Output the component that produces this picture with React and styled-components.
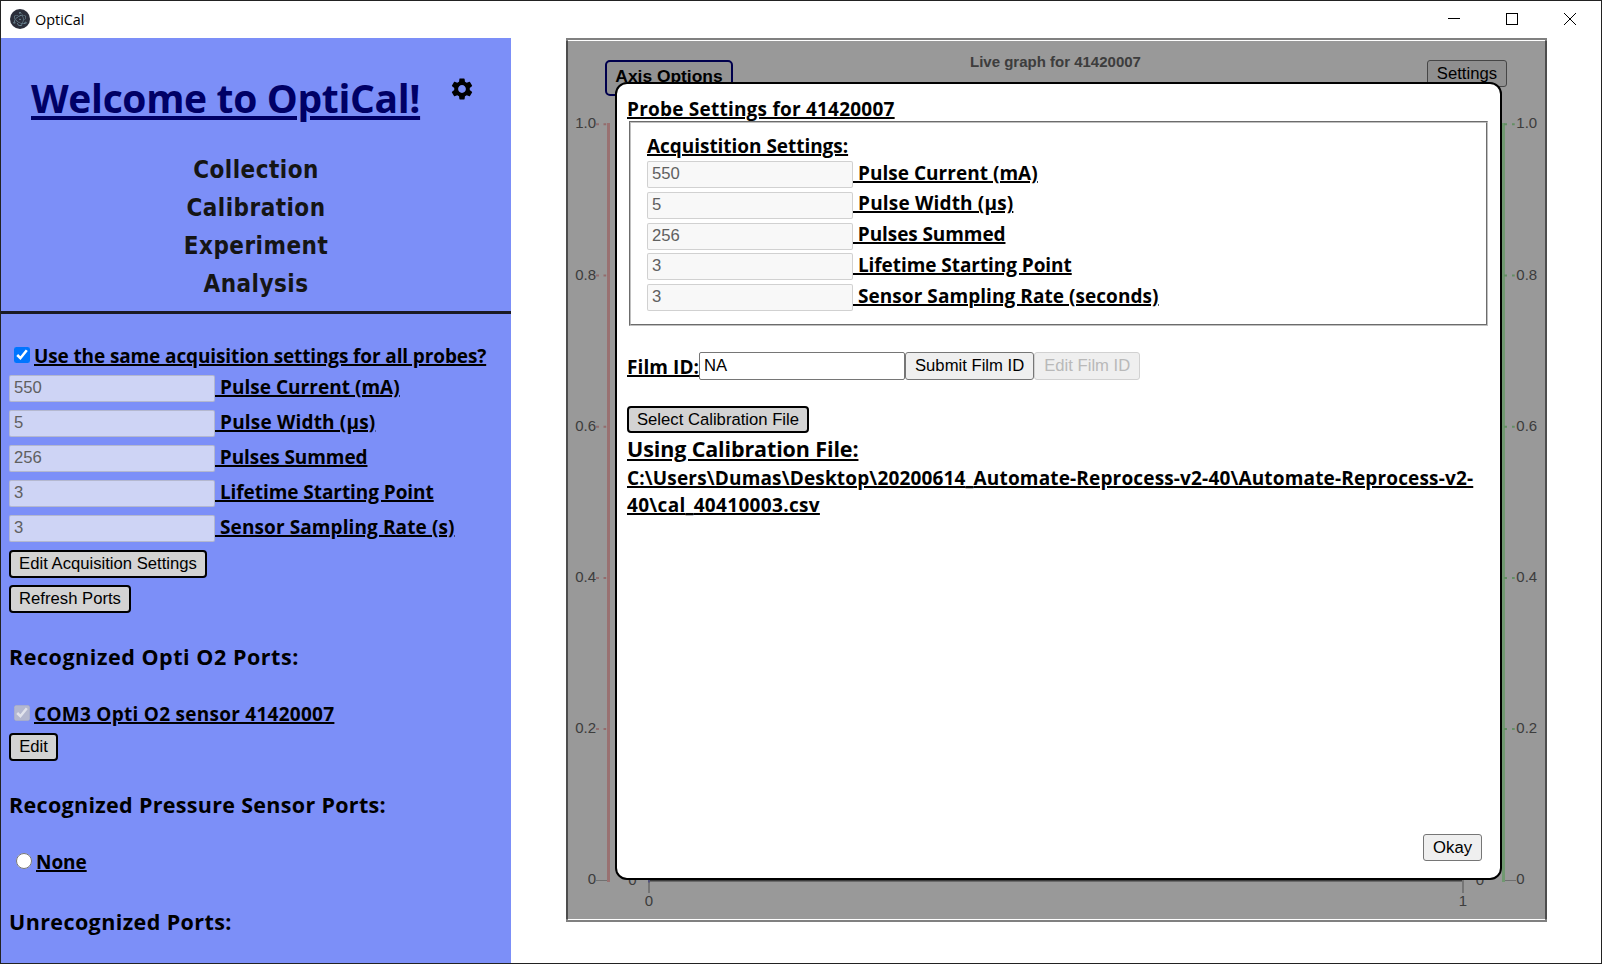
import React from "react";
import styled, { createGlobalStyle, css } from "styled-components";
import { MdSettings } from "react-icons/md";
import { SiElectron } from "react-icons/si";

const ui = `"Open Sans", "Noto Sans", sans-serif`;
const arial = `"Liberation Sans", Arial, sans-serif`;

const GlobalStyle = createGlobalStyle`
  * { box-sizing: border-box; }
  body { margin: 0; background: #fff; color: #000; font-family: ${ui}; }
`;

const Window = styled.div`
  width: 1602px;
  height: 964px;
  border: 1px solid #222;
  background: #fff;
  display: flex;
  flex-direction: column;
  overflow: hidden;
`;

const TitleBar = styled.header`
  height: 37px;
  flex: none;
  display: flex;
  align-items: center;
  padding: 0 24px 2px 9px;
`;

const AppIcon = styled.div`
  width: 20px;
  height: 20px;
  border-radius: 50%;
  background: #2b2e3a;
  color: #9cc9d6;
  display: flex;
  align-items: center;
  justify-content: center;
`;

const AppName = styled.span`
  font-size: 14.4px;
  line-height: 20px;
  margin-left: 5px;
  padding-top: 2px;
`;

const WindowControls = styled.div`
  margin-left: auto;
  margin-right: 1px;
  display: flex;
  gap: 46px;
  svg { display: block; }
`;

const Body = styled.div`
  flex: 1;
  min-height: 0;
  display: flex;
`;

const Sidebar = styled.aside`
  width: 510px;
  flex: none;
  background: #7c8ff8;
  overflow: hidden;
`;

const SidebarHeader = styled.div`
  display: flex;
  align-items: flex-start;
  gap: 29px;
  padding: 34px 0 0 30px;
  height: 113px;
`;

const Title = styled.h1`
  margin: 0;
  width: 389px;
  font-size: 39px;
  line-height: 52px;
  letter-spacing: -0.34px;
  white-space: nowrap;
  color: #000066;
  text-decoration: underline 4px;
  text-underline-offset: 3px;
`;

const GearButton = styled.div`
  margin-top: 4px;
  line-height: 0;
`;

const Nav = styled.nav`
  display: flex;
  flex-direction: column;
  align-items: center;
  height: 163px;
  border-bottom: 3px solid #1a1a24;
`;

const NavItem = styled.a`
  font: bold 24px/38px "DejaVu Sans Condensed", "DejaVu Sans", sans-serif;
  font-stretch: condensed;
  letter-spacing: 0.48px;
  color: #151515;
`;

const SidebarBody = styled.div`
  padding: 29px 0 0 8px;
  display: flex;
  flex-direction: column;
  align-items: flex-start;
`;

const CheckRow = styled.label`
  display: flex;
  height: 28px;
`;

const Toggle = styled.input`
  width: 16px;
  height: 16px;
  margin: ${p => (p.type === "radio" ? "4px 4px 0 7px" : "4px 4px 0 5px")};
`;

const Label = styled.span`
  font-weight: bold;
  font-size: 19px;
  line-height: 26px;
  letter-spacing: ${p => p.$spacing || 0}px;
  white-space: pre;
  text-decoration: underline 2px;
  text-underline-offset: 1px;
`;

const FieldRow = styled.div`
  display: flex;
  align-items: flex-start;
  height: ${p => p.$pitch}px;
  & > ${Label} { margin-top: ${p => p.$labelTop}px; }
`;

const TextField = styled.input`
  width: 206px;
  height: 27px;
  margin: ${p => p.$top || 0}px 0 0;
  padding: 0 4px 1px;
  border: 1px solid ${p => (p.disabled ? "rgba(118,118,118,0.3)" : "#767676")};
  border-radius: 2px;
  background: ${p => (p.$onBlue ? "#ced4f5" : p.disabled ? "#f8f8f8" : "#fff")};
  color: ${p => (p.disabled ? "#606060" : "#000")};
  font: 16.67px ${arial};
`;

const Button = styled.button`
  height: 27px;
  padding: 0 9px;
  border: 1px solid #767676;
  border-radius: 3px;
  background: #efefef;
  color: #000;
  font: 16.67px ${arial};
  white-space: nowrap;
  ${p => p.$strong && css`
    padding: 0 8px;
    border: 2px solid #000;
    border-radius: 4px;
    background: #d3d3d3;
  `}
  &:disabled {
    color: #b9b9b9;
    border-color: #d1d1d1;
  }
`;

const SideButton = styled(Button)`
  height: 28px;
  padding-bottom: 1px;
  margin-top: ${p => p.$top}px;
  width: ${p => p.$width}px;
`;

const SectionTitle = styled.h2`
  margin: ${p => p.$top}px 0 ${p => p.$bottom || 0}px;
  font-size: 21.5px;
  line-height: 30px;
  letter-spacing: ${p => p.$spacing || 0}px;
  white-space: nowrap;
`;

const Main = styled.main`
  flex: 1;
  padding-left: 55px;
`;

const GraphPanel = styled.section`
  position: relative;
  width: 981px;
  height: 884px;
  border: 2px solid #808080;
`;

const GraphHeader = styled.div`
  height: 56px;
  display: flex;
  align-items: flex-start;
  padding: 20px 38px 0 37px;
  & > ${Button} { margin-left: auto; }
`;

const AxisButton = styled.button`
  width: 128px;
  height: 36px;
  padding: 0 0 4px;
  border: 2px solid #000080;
  border-radius: 5px;
  background: #f5f5f5;
  font: bold 17.4px ${arial};
  color: #000;
`;

const GraphTitle = styled.div`
  margin: -8px 0 0 237px;
  font: bold 15px/20px ${arial};
  color: #666;
`;

const Chart = styled.svg`
  display: block;
  font: 15px ${arial};
`;

const Backdrop = styled.div`
  position: absolute;
  inset: 1px -2px;
  background: rgba(0, 0, 0, 0.4);
`;

const Modal = styled.div`
  position: absolute;
  left: 47px;
  top: 42px;
  width: 887px;
  height: 798px;
  border: 2px solid #000;
  border-radius: 12px;
  background: #fff;
  padding: 12px 12px 17px 10px;
  display: flex;
  flex-direction: column;
  align-items: flex-start;
`;

const SettingsBox = styled.div`
  width: 859px;
  height: 205px;
  margin: -1px 0 0 2px;
  border: 2px groove #c0c0c0;
  padding: 10px 16px 0;
  display: flex;
  flex-direction: column;
`;

const FilmRow = styled.div`
  display: flex;
  margin: 26px 0;
  height: 28px;
  & > ${Label} { width: 72px; margin-top: 2px; }
  & > ${TextField}, & > ${Button} { height: 28px; }
  & > ${Button} { padding-bottom: 1px; }
`;

const CalibrationTitle = styled(SectionTitle)`
  margin: 1px 0 0;
  text-decoration: underline 2px;
  text-underline-offset: 2px;
`;

const FilePath = styled.div`
  display: flex;
  flex-direction: column;
  margin-top: 1px;
  & > ${Label} { line-height: 27px; }
`;

const Unskipped = styled.span`
  text-decoration-skip-ink: none;
`;

const ModalFooter = styled.div`
  margin-top: auto;
  align-self: flex-end;
  padding-right: 6px;
`;

const TICKS = ["1.0", "0.8", "0.6", "0.4", "0.2", "0"];

const SIDEBAR_FIELDS = [
  ["550", " Pulse Current (mA)", 0.03],
  ["5", " Pulse Width (µs)", 0.17],
  ["256", " Pulses Summed", -0.09],
  ["3", " Lifetime Starting Point", -0.06],
  ["3", " Sensor Sampling Rate (s)", 0.1],
];

const PROBE_FIELDS = [
  ...SIDEBAR_FIELDS.slice(0, 4),
  ["3", " Sensor Sampling Rate (seconds)", 0.06],
];

function Fields({ items, pitch, onBlue, top, labelTop }) {
  return items.map(([value, label, spacing]) => (
    <FieldRow key={label} $pitch={pitch} $labelTop={labelTop}>
      <TextField defaultValue={value} disabled $onBlue={onBlue} $top={top} />
      <Label $spacing={spacing}>{label}</Label>
    </FieldRow>
  ));
}

function Graph() {
  return (
    <Chart width="977" height="824" viewBox="568 96 977 824" fill="#666">
      <path d="M608.5 123V882" stroke="#ffbcbc" strokeWidth="3" />
      <path d="M1503.5 123V882" stroke="#bcffbc" strokeWidth="3" />
      {TICKS.map((t, i) => {
        const y = 124.3 + i * 151.2;
        return (
          <g key={t}>
            {t === "0" ? (
              <path d="M596 880.5H607M1505 880.5H1516" stroke="#bbb" />
            ) : (
              <>
                <path d={`M596 ${y}h3M603.5 ${y}h2.7`} stroke="#f5b5b5" strokeWidth="2" />
                <path d={`M1504 ${y}h3M1512 ${y}h2.7`} stroke="#a5eea5" strokeWidth="2" />
              </>
            )}
            <text x="596" y={y + 4} textAnchor="end">{t}</text>
            <text x="1516.3" y={y + 4}>{t}</text>
          </g>
        );
      })}
      <path d="M649 880.5H1463" stroke="#666" strokeWidth="2" />
      <path d="M649 880V893M1463 880V893" stroke="#c4c4c4" strokeWidth="2" />
      <path d="M649 880V882.5" stroke="#8888cc" strokeWidth="2" />
      <text x="632.5" y="885" textAnchor="middle">0</text>
      <text x="1480" y="885" textAnchor="middle">0</text>
      <text x="649" y="905.7" textAnchor="middle">0</text>
      <text x="1463" y="905.7" textAnchor="middle">1</text>
    </Chart>
  );
}

function ProbeSettings() {
  return (
    <Modal>
      <Label $spacing={0.22}>Probe Settings for 41420007</Label>
      <SettingsBox>
        <Label $spacing={-0.04}>Acquistition Settings:</Label>
        <Fields items={PROBE_FIELDS} pitch={30.8} top={2} labelTop={0.7} />
      </SettingsBox>
      <FilmRow>
        <Label $spacing={0.08}>Film ID:</Label>
        <TextField defaultValue="NA" />
        <Button>Submit Film ID</Button>
        <Button disabled>Edit Film ID</Button>
      </FilmRow>
      <Button $strong>Select Calibration File</Button>
      <CalibrationTitle $spacing={-0.12}>Using Calibration File:</CalibrationTitle>
      <FilePath>
        <Label $spacing={0.16}>
          {"C:\\Users\\Dumas\\Desktop\\20200614"}
          <Unskipped>_</Unskipped>
          {"Automate-Reprocess-v2-40\\Automate-Reprocess-v2-"}
        </Label>
        <Label $spacing={0.32}>
          {"40\\cal"}
          <Unskipped>_</Unskipped>
          {"40410003.csv"}
        </Label>
      </FilePath>
      <ModalFooter>
        <Button>Okay</Button>
      </ModalFooter>
    </Modal>
  );
}

export default function App() {
  return (
    <Window>
      <GlobalStyle />
      <TitleBar>
        <AppIcon><SiElectron size={14} /></AppIcon>
        <AppName>OptiCal</AppName>
        <WindowControls>
          <svg width="12" height="12"><path d="M0 5.5H12" stroke="#000" /></svg>
          <svg width="12" height="12"><rect x="0.5" y="0.5" width="11" height="11" fill="none" stroke="#000" /></svg>
          <svg width="12" height="12"><path d="M0 0L12 12M12 0L0 12" stroke="#000" /></svg>
        </WindowControls>
      </TitleBar>
      <Body>
        <Sidebar>
          <SidebarHeader>
            <Title>Welcome to OptiCal!</Title>
            <GearButton><MdSettings size={26} color="#000" /></GearButton>
          </SidebarHeader>
          <Nav>
            {["Collection", "Calibration", "Experiment", "Analysis"].map(n => (
              <NavItem key={n}>{n}</NavItem>
            ))}
          </Nav>
          <SidebarBody>
            <CheckRow>
              <Toggle type="checkbox" defaultChecked />
              <Label $spacing={-0.12}>Use the same acquisition settings for all probes?</Label>
            </CheckRow>
            <Fields items={SIDEBAR_FIELDS} pitch={35} onBlue top={4} labelTop={3} />
            <SideButton $strong $top={4} $width={198}>Edit Acquisition Settings</SideButton>
            <SideButton $strong $top={7} $width={122}>Refresh Ports</SideButton>
            <SectionTitle $top={29} $bottom={29} $spacing={0.54}>Recognized Opti O2 Ports:</SectionTitle>
            <CheckRow>
              <Toggle type="checkbox" defaultChecked disabled />
              <Label $spacing={0.27}>COM3 Opti O2 sensor 41420007</Label>
            </CheckRow>
            <SideButton $strong $top={4} $width={49}>Edit</SideButton>
            <SectionTitle $top={29} $bottom={29} $spacing={0.31}>Recognized Pressure Sensor Ports:</SectionTitle>
            <CheckRow>
              <Toggle type="radio" />
              <Label $spacing={-0.06}>None</Label>
            </CheckRow>
            <SectionTitle $top={30} $spacing={0.4}>Unrecognized Ports:</SectionTitle>
          </SidebarBody>
        </Sidebar>
        <Main>
          <GraphPanel>
            <GraphHeader>
              <AxisButton>Axis Options</AxisButton>
              <GraphTitle>Live graph for 41420007</GraphTitle>
              <Button>Settings</Button>
            </GraphHeader>
            <Graph />
            <Backdrop />
            <ProbeSettings />
          </GraphPanel>
        </Main>
      </Body>
    </Window>
  );
}
